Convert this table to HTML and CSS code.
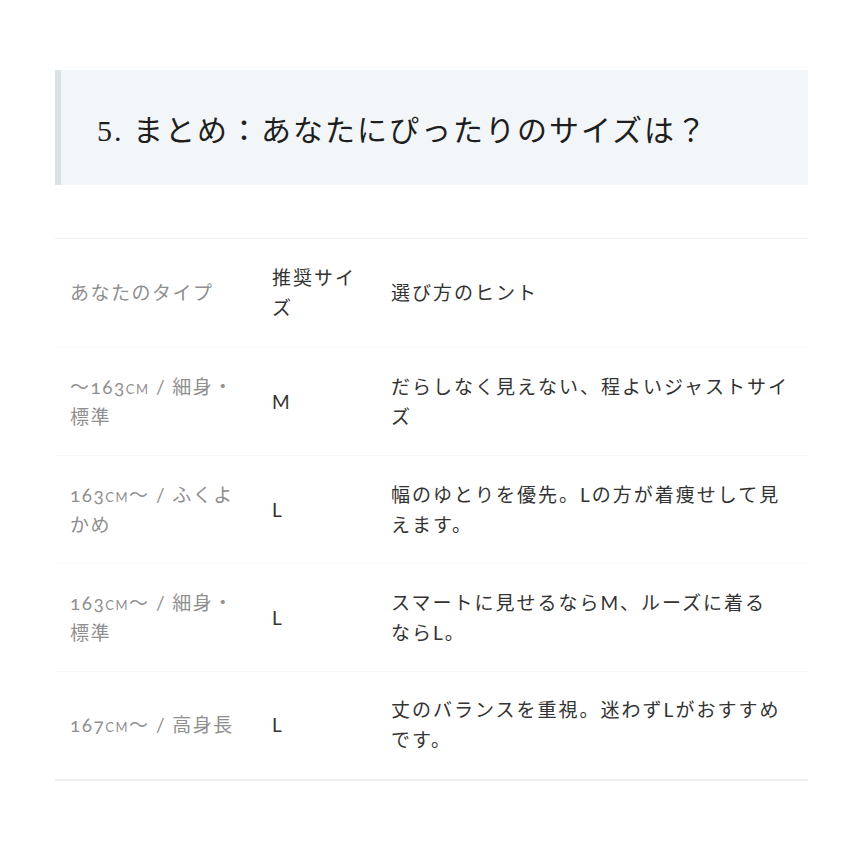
FILE: index.html
```html
<!DOCTYPE html>
<html lang="ja">
<head>
<meta charset="utf-8">
<link rel="stylesheet" href="styles.css">
</head>
<body>
<div class="page">
  <h2 class="title">5. まとめ：あなたにぴったりのサイズは？</h2>
  <table class="size-table">
    <thead>
      <tr>
        <th class="c1">あなたのタイプ</th>
        <th class="c2">推奨サイズ</th>
        <th class="c3">選び方のヒント</th>
      </tr>
    </thead>
    <tbody>
      <tr>
        <td class="c1">〜163cm / 細身・標準</td>
        <td class="c2">M</td>
        <td class="c3">だらしなく見えない、程よいジャストサイズ</td>
      </tr>
      <tr>
        <td class="c1">163cm〜 / ふくよかめ</td>
        <td class="c2">L</td>
        <td class="c3">幅のゆとりを優先。Lの方が着痩せして見えます。</td>
      </tr>
      <tr>
        <td class="c1">163cm〜 / 細身・標準</td>
        <td class="c2">L</td>
        <td class="c3">スマートに見せるならM、ルーズに着る<span class="nw">ならL。</span></td>
      </tr>
      <tr>
        <td class="c1">167cm〜 / 高身長</td>
        <td class="c2">L</td>
        <td class="c3">丈のバランスを重視。迷わずLがおすすめです。</td>
      </tr>
    </tbody>
  </table>
</div>
</body>
</html>
```
FILE: styles.css
```css
html, body {
  margin: 0;
  padding: 0;
  background: #ffffff;
}
.page {
  width: 753px;
  margin-left: 55px;
  padding-top: 70px;
  font-family: "Lato", "Noto Sans CJK JP", sans-serif;
}
.title {
  margin: 0;
  height: 115px;
  box-sizing: border-box;
  display: flex;
  align-items: center;
  padding-left: 36px;
  background: #f3f6f9;
  border-left: 6px solid #d9e2e9;
  font-family: "Liberation Serif", "Noto Sans CJK JP", serif;
  font-weight: 400;
  font-size: 30px;
  color: #1e1e1e;
  letter-spacing: 2px;
}
.size-table {
  margin-top: 53px;
  width: 753px;
  border-collapse: collapse;
  table-layout: fixed;
  border-top: 1px solid #eeeeee;
  border-bottom: 2px solid #eeeeee;
}
.size-table th,
.size-table td {
  font-weight: 400;
  text-align: left;
  font-size: 19px;
  line-height: 30px;
  letter-spacing: 2px;
  padding: 0 15px;
  vertical-align: middle;
  color: #333333;
  font-variant-numeric: oldstyle-nums;
}
.size-table thead tr { height: 109px; }
.size-table tbody tr { height: 108px; border-top: 1px solid #f6f6f6; }
.size-table .c1 { width: 172px; color: #8f8f8f; font-variant-caps: small-caps; letter-spacing: 1.5px; }
.size-table .c2 { width: 89px; }
.size-table .c3 { width: 402px; }
.nw { white-space: nowrap; }
```
